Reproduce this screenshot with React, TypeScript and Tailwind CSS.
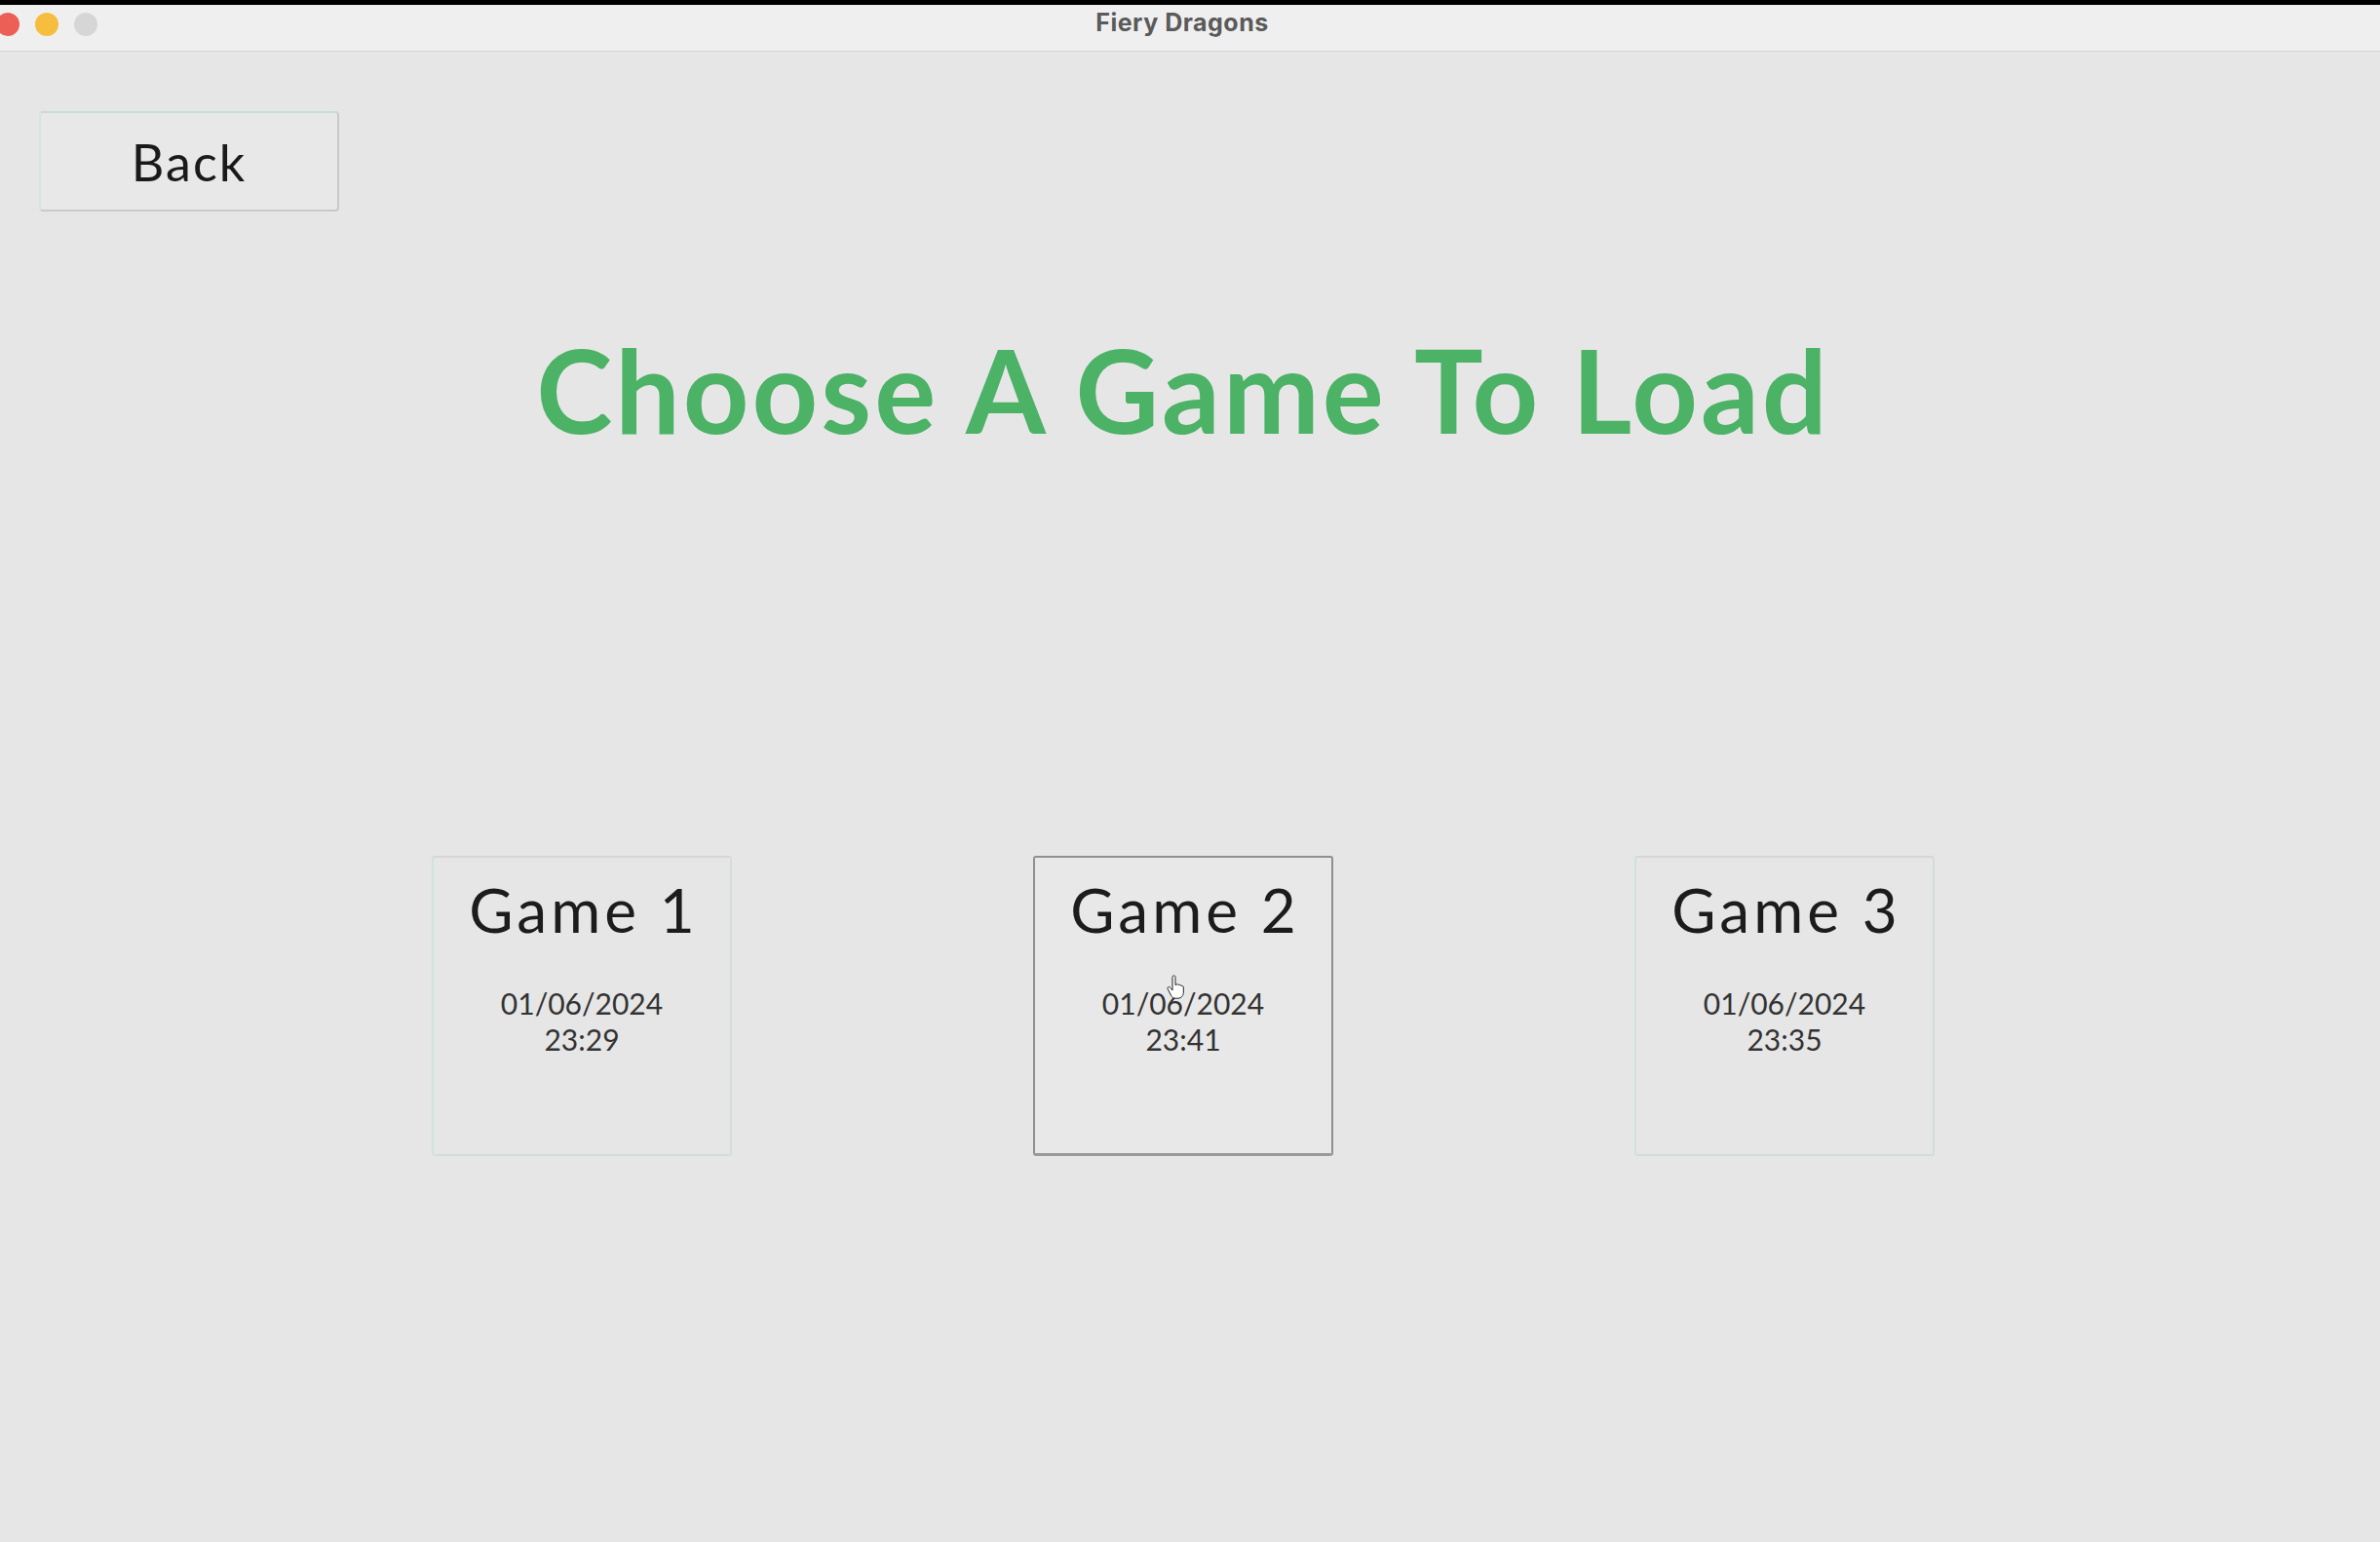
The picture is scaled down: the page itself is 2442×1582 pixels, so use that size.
import React from 'react';

type SaveSlot = { name: string; date: string; time: string; hovered?: boolean };

const slots: SaveSlot[] = [
    { name: 'Game 1', date: '01/06/2024', time: '23:29' },
    { name: 'Game 2', date: '01/06/2024', time: '23:41', hovered: true },
    { name: 'Game 3', date: '01/06/2024', time: '23:35' },
];

function SlotCard({ slot }: { slot: SaveSlot }) {
    return (
        <div
            className={
                slot.hovered
                    ? 'relative flex flex-col items-center w-[308px] h-[308px] pt-[22px] bg-[#e8e8e8] border-2 border-[#8f8f8f] border-b-[3px] border-b-[#9a9a9a] rounded-[3px]'
                    : 'relative flex flex-col items-center w-[308px] h-[308px] pt-[22px] bg-[#e6e6e6] border-2 border-[#d3dedc] border-t-[#d6d6d6] border-l-[#cde3df] rounded-[3px]'
            }
        >
            <p className="text-[62px] leading-none text-[#1c1c1c] tracking-[4px] pl-[4px]">{slot.name}</p>
            <div className="mt-[47px] flex flex-col items-center text-[30px] leading-[37px] text-[#333333]">
                <span>{slot.date}</span>
                <span>{slot.time}</span>
            </div>
            {slot.hovered && (
                <svg
                    className="absolute left-[134px] top-[120px]"
                    width="22"
                    height="26"
                    viewBox="0 0 22 26"
                >
                    <path
                        d="M7 2.5c0-1 .7-1.6 1.5-1.6S10 1.5 10 2.5v8l1-.2c.6-.8 2.2-.8 2.6.4.8-.6 2.2-.3 2.5.8.9-.4 2.2.1 2.2 1.4v5.3c0 3.2-2.3 6-5.5 6H10c-1.8 0-3.3-1-4.2-2.5L2.2 14.6c-.6-1 .1-2.2 1.3-2 .7.1 1.3.6 1.8 1.2L7 16V2.5z"
                        fill="#ffffff"
                        stroke="#222222"
                        strokeWidth="1"
                        strokeLinejoin="round"
                    />
                </svg>
            )}
        </div>
    );
}

export default function App() {
    return (
        <div className="w-full h-[1582px] flex flex-col bg-[#e6e6e6] font-['Lato','Liberation_Sans',sans-serif] overflow-hidden">
            {/* window chrome */}
            <div className="h-[5px] bg-black" />
            <div className="h-[48px] flex items-start bg-[#efefef] border-b border-[#d4d4d4]">
                <div className="flex items-center gap-[16px] ml-[-4px] mt-[8px]">
                    <span className="w-[24px] h-[24px] rounded-full bg-[#ec5f57]" />
                    <span className="w-[24px] h-[24px] rounded-full bg-[#f5be3f]" />
                    <span className="w-[24px] h-[24px] rounded-full bg-[#d6d6d6]" />
                </div>
                <p className="flex-1 text-center pt-[6px] pr-[116px] text-[25px] leading-none font-bold tracking-[0.5px] text-[#5a5a5a] font-['Inter','Liberation_Sans',sans-serif]">
                    Fiery Dragons
                </p>
            </div>

            {/* content */}
            <div className="flex-1 flex flex-col">
                <div className="pl-[40px] pt-[61px]">
                    <button className="w-[308px] h-[103px] flex items-center justify-center bg-[#e8e8e8] border-2 border-[#c9c9c9] border-t-[#c6ddd8] border-l-[#d2e6e2] rounded-[4px] text-[52px] tracking-[2px] text-[#1a1a1a]">
                        Back
                    </button>
                </div>

                <h1 className="mt-[124px] text-center pr-[14px] text-[118px] leading-none font-bold tracking-[3px] text-[#4bb266]">
                    Choose A Game To Load
                </h1>

                <div className="mt-[419px] flex justify-center gap-[309px] pr-[14px]">
                    {slots.map((s) => (
                        <SlotCard key={s.name} slot={s} />
                    ))}
                </div>
            </div>
        </div>
    );
}
